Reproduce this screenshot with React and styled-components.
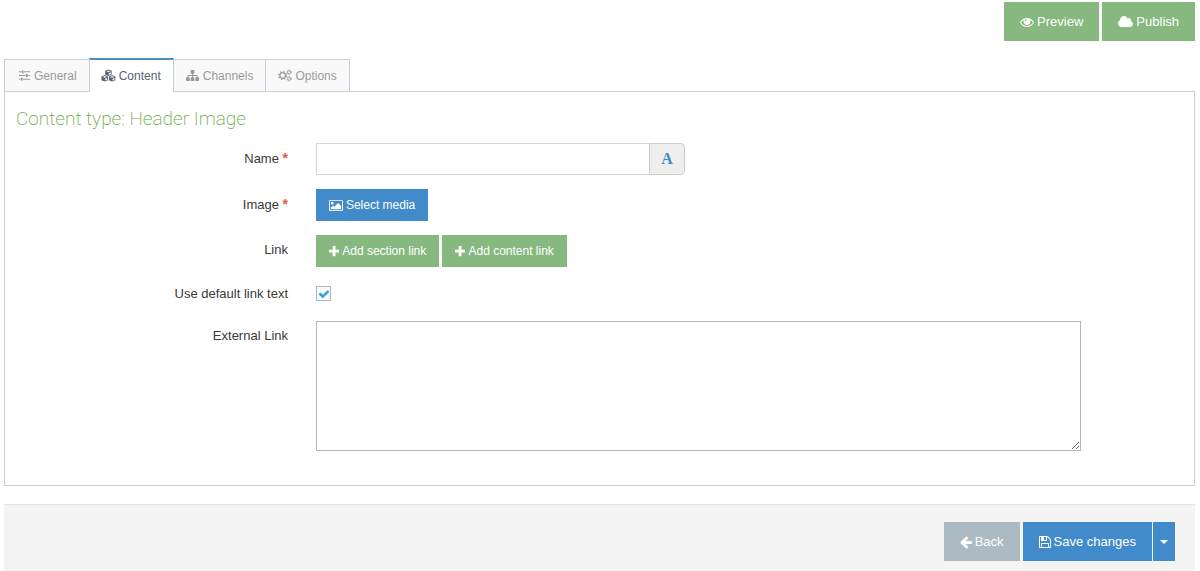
import styled, { createGlobalStyle } from 'styled-components'

const Icon = ({ name }) => {
  const [viewBox, path] = icons[name]
  const [, , w, h] = viewBox.split(' ')
  return (
    <Glyph viewBox={viewBox} $ratio={w / h} aria-hidden="true">
      <path fillRule={name === 'cubes' ? 'evenodd' : 'nonzero'} d={path} />
    </Glyph>
  )
}

const GearsIcon = () => (
  <Glyph viewBox="0 0 30 28" $ratio={30 / 28} aria-hidden="true">
    <g fill="none" stroke="currentColor">
      <circle cx="10" cy="14" r="6" strokeWidth="2.6" />
      <circle cx="10" cy="14" r="8.5" strokeWidth="2.6" strokeDasharray="3.2 3.48" />
      <circle cx="24" cy="7" r="3.4" strokeWidth="2" />
      <circle cx="24" cy="7" r="5" strokeWidth="1.6" strokeDasharray="2.6 2.63" />
      <circle cx="24" cy="21" r="3.4" strokeWidth="2" />
      <circle cx="24" cy="21" r="5" strokeWidth="1.6" strokeDasharray="2.6 2.63" />
    </g>
  </Glyph>
)

const App = () => {
  return (
    <>
      <GlobalStyle />
      <Page>
        <TopBar>
          <Button type="button" $large $color="green">
            <Icon name="eye" /> Preview
          </Button>
          <Button type="button" $large $color="green">
            <Icon name="cloud" /> Publish
          </Button>
        </TopBar>

        <Tabs role="tablist">
          <Tab type="button" role="tab" aria-selected="false">
            <TabIcon>
              <Icon name="sliders" />
            </TabIcon>
            General
          </Tab>
          <Tab type="button" role="tab" aria-selected="true" $active>
            <TabIcon>
              <Icon name="cubes" />
            </TabIcon>
            Content
          </Tab>
          <Tab type="button" role="tab" aria-selected="false">
            <TabIcon>
              <Icon name="sitemap" />
            </TabIcon>
            Channels
          </Tab>
          <Tab type="button" role="tab" aria-selected="false">
            <TabIcon>
              <GearsIcon />
            </TabIcon>
            Options
          </Tab>
        </Tabs>

        <Panel role="tabpanel">
          <Title>Content type: Header Image</Title>
          <Row>
            <Label htmlFor="name">
              Name <Required>*</Required>
            </Label>
            <InputGroup>
              <TextInput id="name" type="text" />
              <Addon type="button">A</Addon>
            </InputGroup>
          </Row>
          <Row>
            <Label htmlFor="image">
              Image <Required>*</Required>
            </Label>
            <Button id="image" type="button" $color="blue">
              <Icon name="picture" /> Select media
            </Button>
          </Row>
          <Row $tight>
            <Label as="span">Link</Label>
            <ButtonGroup>
              <Button type="button" $color="green">
                <Icon name="plus" /> Add section link
              </Button>
              <Button type="button" $color="green">
                <Icon name="plus" /> Add content link
              </Button>
            </ButtonGroup>
          </Row>
          <Row>
            <Label htmlFor="default-text">Use default link text</Label>
            <CheckCell>
              <Checkbox id="default-text" type="checkbox" defaultChecked />
              <Icon name="check" />
            </CheckCell>
          </Row>
          <Row>
            <Label htmlFor="external">External Link</Label>
            <TextArea id="external" />
          </Row>
        </Panel>

        <Footer>
          <Button type="button" $large $color="grey">
            <Icon name="arrow" /> Back
          </Button>
          <SplitButton>
            <Button type="button" $large $color="blue">
              <Icon name="floppy" /> Save changes
            </Button>
            <Toggle type="button" $large $color="blue" aria-label="More save options">
              <Caret />
            </Toggle>
          </SplitButton>
        </Footer>
      </Page>
    </>
  )
}
export default App

const icons = {
  eye: [
    '0 0 1792 1792',
    'M1664 960q-152-236-381-353 61 104 61 225 0 185-131.5 316.5t-316.5 131.5-316.5-131.5-131.5-316.5q0-121 61-225-229 117-381 353 133 205 333.5 326.5t434.5 121.5 434.5-121.5 333.5-326.5zm-720-384q0-20-14-34t-34-14q-125 0-214.5 89.5t-89.5 214.5q0 20 14 34t34 14 34-14 14-34q0-86 61-147t147-61q20 0 34-14t14-34zm848 384q0 34-20 69-140 230-376.5 368.5t-499.5 138.5-499.5-139-376.5-368q-20-35-20-69t20-69q140-229 376.5-368t499.5-139 499.5 139 376.5 368q20 35 20 69z',
  ],
  cloud: [
    '64 0 1920 1792',
    'M1984 1152q0 159-112.5 271.5t-271.5 112.5h-1088q-185 0-316.5-131.5t-131.5-316.5q0-132 71-241.5t187-163.5q-2-28-2-43 0-212 150-362t362-150q158 0 286.5 88t187.5 230q70-62 166-62 106 0 181 75t75 181q0 75-41 138 129 30 213 134.5t84 239.5z',
  ],
  sliders: [
    '0 0 14 14',
    'M1 2.5h2.500v1H1zM6.500 2.500H13v1H6.500zM4 1.500h2v3H4zM1 6.500h7v1H1zM11 6.500h2v1h-2zM8.500 5.500h2v3h-2zM1 10.500h1.500v1H1zM5.500 10.500H13v1H5.500zM3 9.500h2v3H3z',
  ],
  cubes: [
    '0 0 32 28',
    'M16 1l7 3v8l-7 3-7-3V4zM16 3l-4.500 2 4.500 2 4.500-2zM17 9v4l4-1.800V7.200zM8 13l7 3v8l-7 3-7-3v-8zM8 15l-4.500 2L8 19l4.500-2zM9 21v4l4-1.800v-4zM24 13l7 3v8l-7 3-7-3v-8zM24 15l-4.500 2 4.500 2 4.500-2zM25 21v4l4-1.800v-4z',
  ],
  sitemap: [
    '0 0 1792 1792',
    'M1792 1248v320q0 40-28 68t-68 28h-320q-40 0-68-28t-28-68v-320q0-40 28-68t68-28h96v-192h-512v192h96q40 0 68 28t28 68v320q0 40-28 68t-68 28h-320q-40 0-68-28t-28-68v-320q0-40 28-68t68-28h96v-192h-512v192h96q40 0 68 28t28 68v320q0 40-28 68t-68 28h-320q-40 0-68-28t-28-68v-320q0-40 28-68t68-28h96v-192q0-52 38-90t90-38h512v-192h-96q-40 0-68-28t-28-68v-320q0-40 28-68t68-28h320q40 0 68 28t28 68v320q0 40-28 68t-68 28h-96v192h512q52 0 90 38t38 90v192h96q40 0 68 28t28 68z',
  ],
  picture: [
    '-64 0 1920 1792',
    'M576 576q0 80-56 136t-136 56-136-56-56-136 56-136 136-56 136 56 56 136zm1024 384v448h-1408v-192l320-320 160 160 512-512zm96-704h-1600q-13 0-22.500 9.500t-9.500 22.500v1216q0 13 9.500 22.500t22.500 9.500h1600q13 0 22.500-9.500t9.500-22.500v-1216q0-13-9.500-22.500t-22.500-9.500zm160 32v1216q0 66-47 113t-113 47h-1600q-66 0-113-47t-47-113v-1216q0-66 47-113t113-47h1600q66 0 113 47t47 113z',
  ],
  plus: [
    '192 0 1408 1792',
    'M1600 736v192q0 40-28 68t-68 28h-416v416q0 40-28 68t-68 28h-192q-40 0-68-28t-28-68v-416h-416q-40 0-68-28t-28-68v-192q0-40 28-68t68-28h416v-416q0-40 28-68t68-28h192q40 0 68 28t28 68v416h416q40 0 68 28t28 68z',
  ],
  check: [
    '0 0 1792 1792',
    'M1671 566q0 40-28 68l-724 724-136 136q-28 28-68 28t-68-28l-136-136-362-362q-28-28-28-68t28-68l136-136q28-28 68-28t68 28l294 295 656-657q28-28 68-28t68 28l136 136q28 28 28 68z',
  ],
  arrow: [
    '128 0 1536 1792',
    'M1664 896v128q0 53-32.5 90.5t-84.5 37.5h-704l293 294q38 36 38 90t-38 90l-75 76q-37 37-90 37-52 0-91-37l-651-652q-37-37-37-90 0-52 37-91l651-650q38-38 91-38 52 0 90 38l75 74q38 38 38 91t-38 91l-293 293h704q52 0 84.5 37.5t32.5 90.5z',
  ],
  floppy: [
    '128 0 1536 1792',
    'M512 1536h768v-384h-768v384zm896 0h128v-896q0-14-10-38.5t-20-34.5l-281-281q-10-10-34-20t-39-10v416q0 40-28 68t-68 28h-576q-40 0-68-28t-28-68v-416h-128v1280h128v-416q0-40 28-68t68-28h832q40 0 68 28t28 68v416zm-384-928v-320q0-13-9.5-22.5t-22.5-9.5h-192q-13 0-22.5 9.5t-9.5 22.5v320q0 13 9.5 22.5t22.5 9.5h192q13 0 22.5-9.5t9.5-22.5zm640 32v928q0 40-28 68t-68 28h-1344q-40 0-68-28t-28-68v-1344q0-40 28-68t68-28h928q40 0 88 20t76 48l280 280q28 28 48 76t20 88z',
  ],
}

const colors = {
  green: '#87b87f',
  blue: '#428bca',
  grey: '#abbac3',
}

const GlobalStyle = createGlobalStyle`
  * {
    box-sizing: border-box;
  }

  body {
    margin: 0;
    background: #fff;
    color: #393939;
    font-family: 'Liberation Sans', Arial, sans-serif;
    font-size: 13px;
    line-height: 20px;
  }

  button,
  input,
  textarea {
    font: inherit;
  }
`

const Glyph = styled.svg`
  height: 1em;
  width: ${({ $ratio }) => $ratio}em;
  flex: none;
  fill: currentColor;
`

const Page = styled.main`
  padding: 2px 5px 0 4px;
`

const TopBar = styled.div`
  display: flex;
  justify-content: flex-end;
  gap: 3px;
`

const Button = styled.button`
  display: flex;
  align-items: center;
  justify-content: center;
  gap: 3px;
  height: ${({ $large }) => ($large ? 39 : 32)}px;
  padding: 0 ${({ $large }) => ($large ? 16 : 13)}px;
  border: 0;
  background: ${({ $color }) => colors[$color]};
  color: #fff;
  font-size: ${({ $large }) => ($large ? 13 : 12)}px;
  white-space: nowrap;
  cursor: pointer;

  svg {
    font-size: ${({ $large }) => ($large ? 14 : 13)}px;
  }
`

const Tabs = styled.div`
  display: flex;
  align-items: flex-end;
  margin-top: 17px;
`

const Tab = styled.button`
  display: flex;
  align-items: center;
  gap: 3px;
  height: ${({ $active }) => ($active ? 34 : 33)}px;
  margin: 0 0 -1px -1px;
  padding: 0 12px;
  background: ${({ $active }) => ($active ? '#fff' : '#f9f9f9')};
  border: 1px solid #c5d0dc;
  border-top: ${({ $active }) => ($active ? '2px solid #4c8fbd' : '1px solid #c5d0dc')};
  border-bottom-color: ${({ $active }) => ($active ? '#fff' : '#c5d0dc')};
  color: ${({ $active }) => ($active ? '#576373' : '#999')};
  font-size: 12px;
  cursor: pointer;

  &:first-child {
    margin-left: 0;
  }
`

const TabIcon = styled.span`
  display: flex;
  justify-content: center;
  width: 14px;
  font-size: 13px;
`

const Panel = styled.section`
  padding: 12px 11px 20px;
  border: 1px solid #c5d0dc;
`

const Title = styled.h1`
  margin: 0 0 9px;
  color: #69aa46;
  font-family: Roboto, Inter, sans-serif;
  font-size: 19px;
  font-weight: 200;
  line-height: 30px;
`

const Row = styled.div`
  display: grid;
  grid-template-columns: 272px minmax(0, 765px);
  justify-items: start;
  column-gap: 28px;
  min-height: 28px;
  margin-bottom: ${({ $tight }) => ($tight ? 12 : 14)}px;
`

const Label = styled.label`
  justify-self: end;
  padding-top: 5px;
`

const Required = styled.span`
  color: #dd5a43;
  font-size: 14px;
  font-weight: 700;
`

const InputGroup = styled.div`
  display: flex;
  width: 369px;
  max-width: 100%;
`

const TextInput = styled.input`
  flex: 1;
  min-width: 0;
  height: 32px;
  padding: 5px 8px;
  border: 1px solid #d5d5d5;
  border-right: 0;
`

const Addon = styled.button`
  width: 36px;
  padding: 0;
  border: 1px solid #ccc;
  border-radius: 0 4px 4px 0;
  background: #eee;
  color: #428bca;
  font-family: 'Liberation Serif', serif;
  font-size: 16px;
  font-weight: 700;
  cursor: pointer;
`

const ButtonGroup = styled.div`
  display: flex;
  gap: 3px;
`

const CheckCell = styled.span`
  display: grid;
  place-items: center;
  align-self: start;
  margin-top: 7px;

  > * {
    grid-area: 1 / 1;
  }

  svg {
    color: #32a3ce;
    font-size: 12px;
    pointer-events: none;
  }

  input:not(:checked) + svg {
    display: none;
  }
`

const Checkbox = styled.input`
  appearance: none;
  width: 15px;
  height: 15px;
  margin: 0;
  border: 1px solid #adb8c0;
  background: #f9fafb;
`

const TextArea = styled.textarea`
  width: 100%;
  height: 130px;
  padding: 5px;
  border: 1px solid #b5b5b5;
  resize: both;
`

const Footer = styled.footer`
  display: flex;
  justify-content: flex-end;
  gap: 3px;
  margin-top: 18px;
  padding: 17px 20px 10px;
  border-top: 1px solid #e5e5e5;
  background: #f4f4f4;
`

const SplitButton = styled.div`
  display: flex;
  gap: 1px;
`

const Toggle = styled(Button)`
  padding: 0 7px;
`

const Caret = styled.span`
  border: 4px solid transparent;
  border-top-color: #fff;
  border-bottom: 0;
`
